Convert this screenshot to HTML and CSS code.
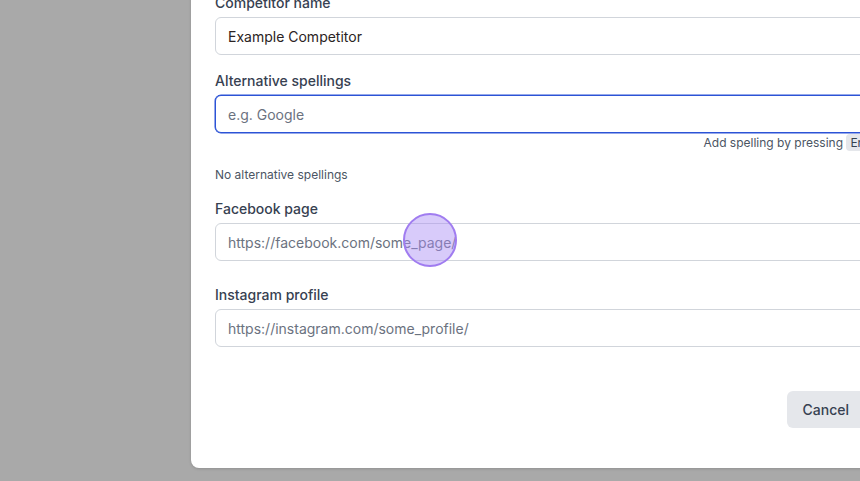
FILE: index.html
```html
<!DOCTYPE html>
<html lang="en">
<head>
<meta charset="utf-8">
<title>Edit competitor</title>
<link rel="stylesheet" href="styles.css">
</head>
<body>
<div class="modal">
  <div class="field">
    <label class="label">Competitor name</label>
    <input class="input" type="text" value="Example Competitor">
  </div>
  <div class="field field-spellings">
    <label class="label">Alternative spellings</label>
    <input class="input input-focus" type="text" placeholder="e.g. Google">
    <div class="hint">Add spelling by pressing <kbd class="kbd">Enter</kbd></div>
  </div>
  <p class="empty">No alternative spellings</p>
  <div class="field field-fb">
    <label class="label">Facebook page</label>
    <input class="input" type="text" placeholder="https://facebook.com/some_page/">
  </div>
  <div class="field">
    <label class="label">Instagram profile</label>
    <input class="input" type="text" placeholder="https://instagram.com/some_profile/">
  </div>
  <div class="footer">
    <button class="btn-cancel" type="button">Cancel</button>
  </div>
</div>
<div class="click-dot"></div>
</body>
</html>
```

FILE: styles.css
```css
html, body {
  margin: 0;
  height: 481px;
  overflow: hidden;
}
body {
  background: #a9a9a9;
  font-family: Inter, "Noto Sans", "Liberation Sans", sans-serif;
  position: relative;
}
.modal {
  box-sizing: border-box;
  width: 717px;
  margin: -31px 0 0 191px;
  padding: 24px 24px 40px;
  background: #ffffff;
  border-radius: 8px;
  box-shadow: 0 1px 3px rgba(0,0,0,0.15);
}
.field {
  display: flex;
  flex-direction: column;
  margin-bottom: 16px;
}
.field-fb {
  margin-bottom: 24px;
}
.field-spellings {
  margin-bottom: 0;
}
.label {
  font-size: 14px;
  line-height: 20px;
  font-weight: 500;
  color: #374151;
  margin-bottom: 4px;
}
.input {
  box-sizing: border-box;
  height: 38px;
  width: 100%;
  padding: 0 12px;
  border: 1px solid #d1d5db;
  border-radius: 6px;
  background: #fff;
  font-family: inherit;
  font-size: 14px;
  color: #2b2323;
  outline: none;
}
.input::placeholder {
  color: #6b7280;
}
.input-focus {
  border-color: #2c53d6;
  box-shadow: 0 0 0 0.5px #2c53d6;
}
.hint {
  margin-top: 2px;
  text-align: right;
  font-size: 12px;
  line-height: 16px;
  color: #4b5563;
}
.kbd {
  font-family: inherit;
  font-size: 12px;
  background: #e5e7eb;
  color: #374151;
  border-radius: 4px;
  padding: 1px 4px;
}
.empty {
  margin: 16px 0 16px;
  font-size: 12px;
  line-height: 16px;
  color: #4b5563;
}
.footer {
  display: flex;
  justify-content: flex-end;
  margin-top: 44px;
  padding-right: 19px;
}
.btn-cancel {
  height: 37px;
  padding: 0 16px;
  border: none;
  border-radius: 6px;
  background: #e5e7eb;
  color: #374151;
  font-family: inherit;
  font-size: 14px;
  font-weight: 500;
}
.click-dot {
  position: absolute;
  left: 403px;
  top: 213px;
  width: 50px;
  height: 50px;
  border-radius: 50%;
  border: 2px solid #a07cf0;
  background: rgba(168, 140, 245, 0.45);
}
```
